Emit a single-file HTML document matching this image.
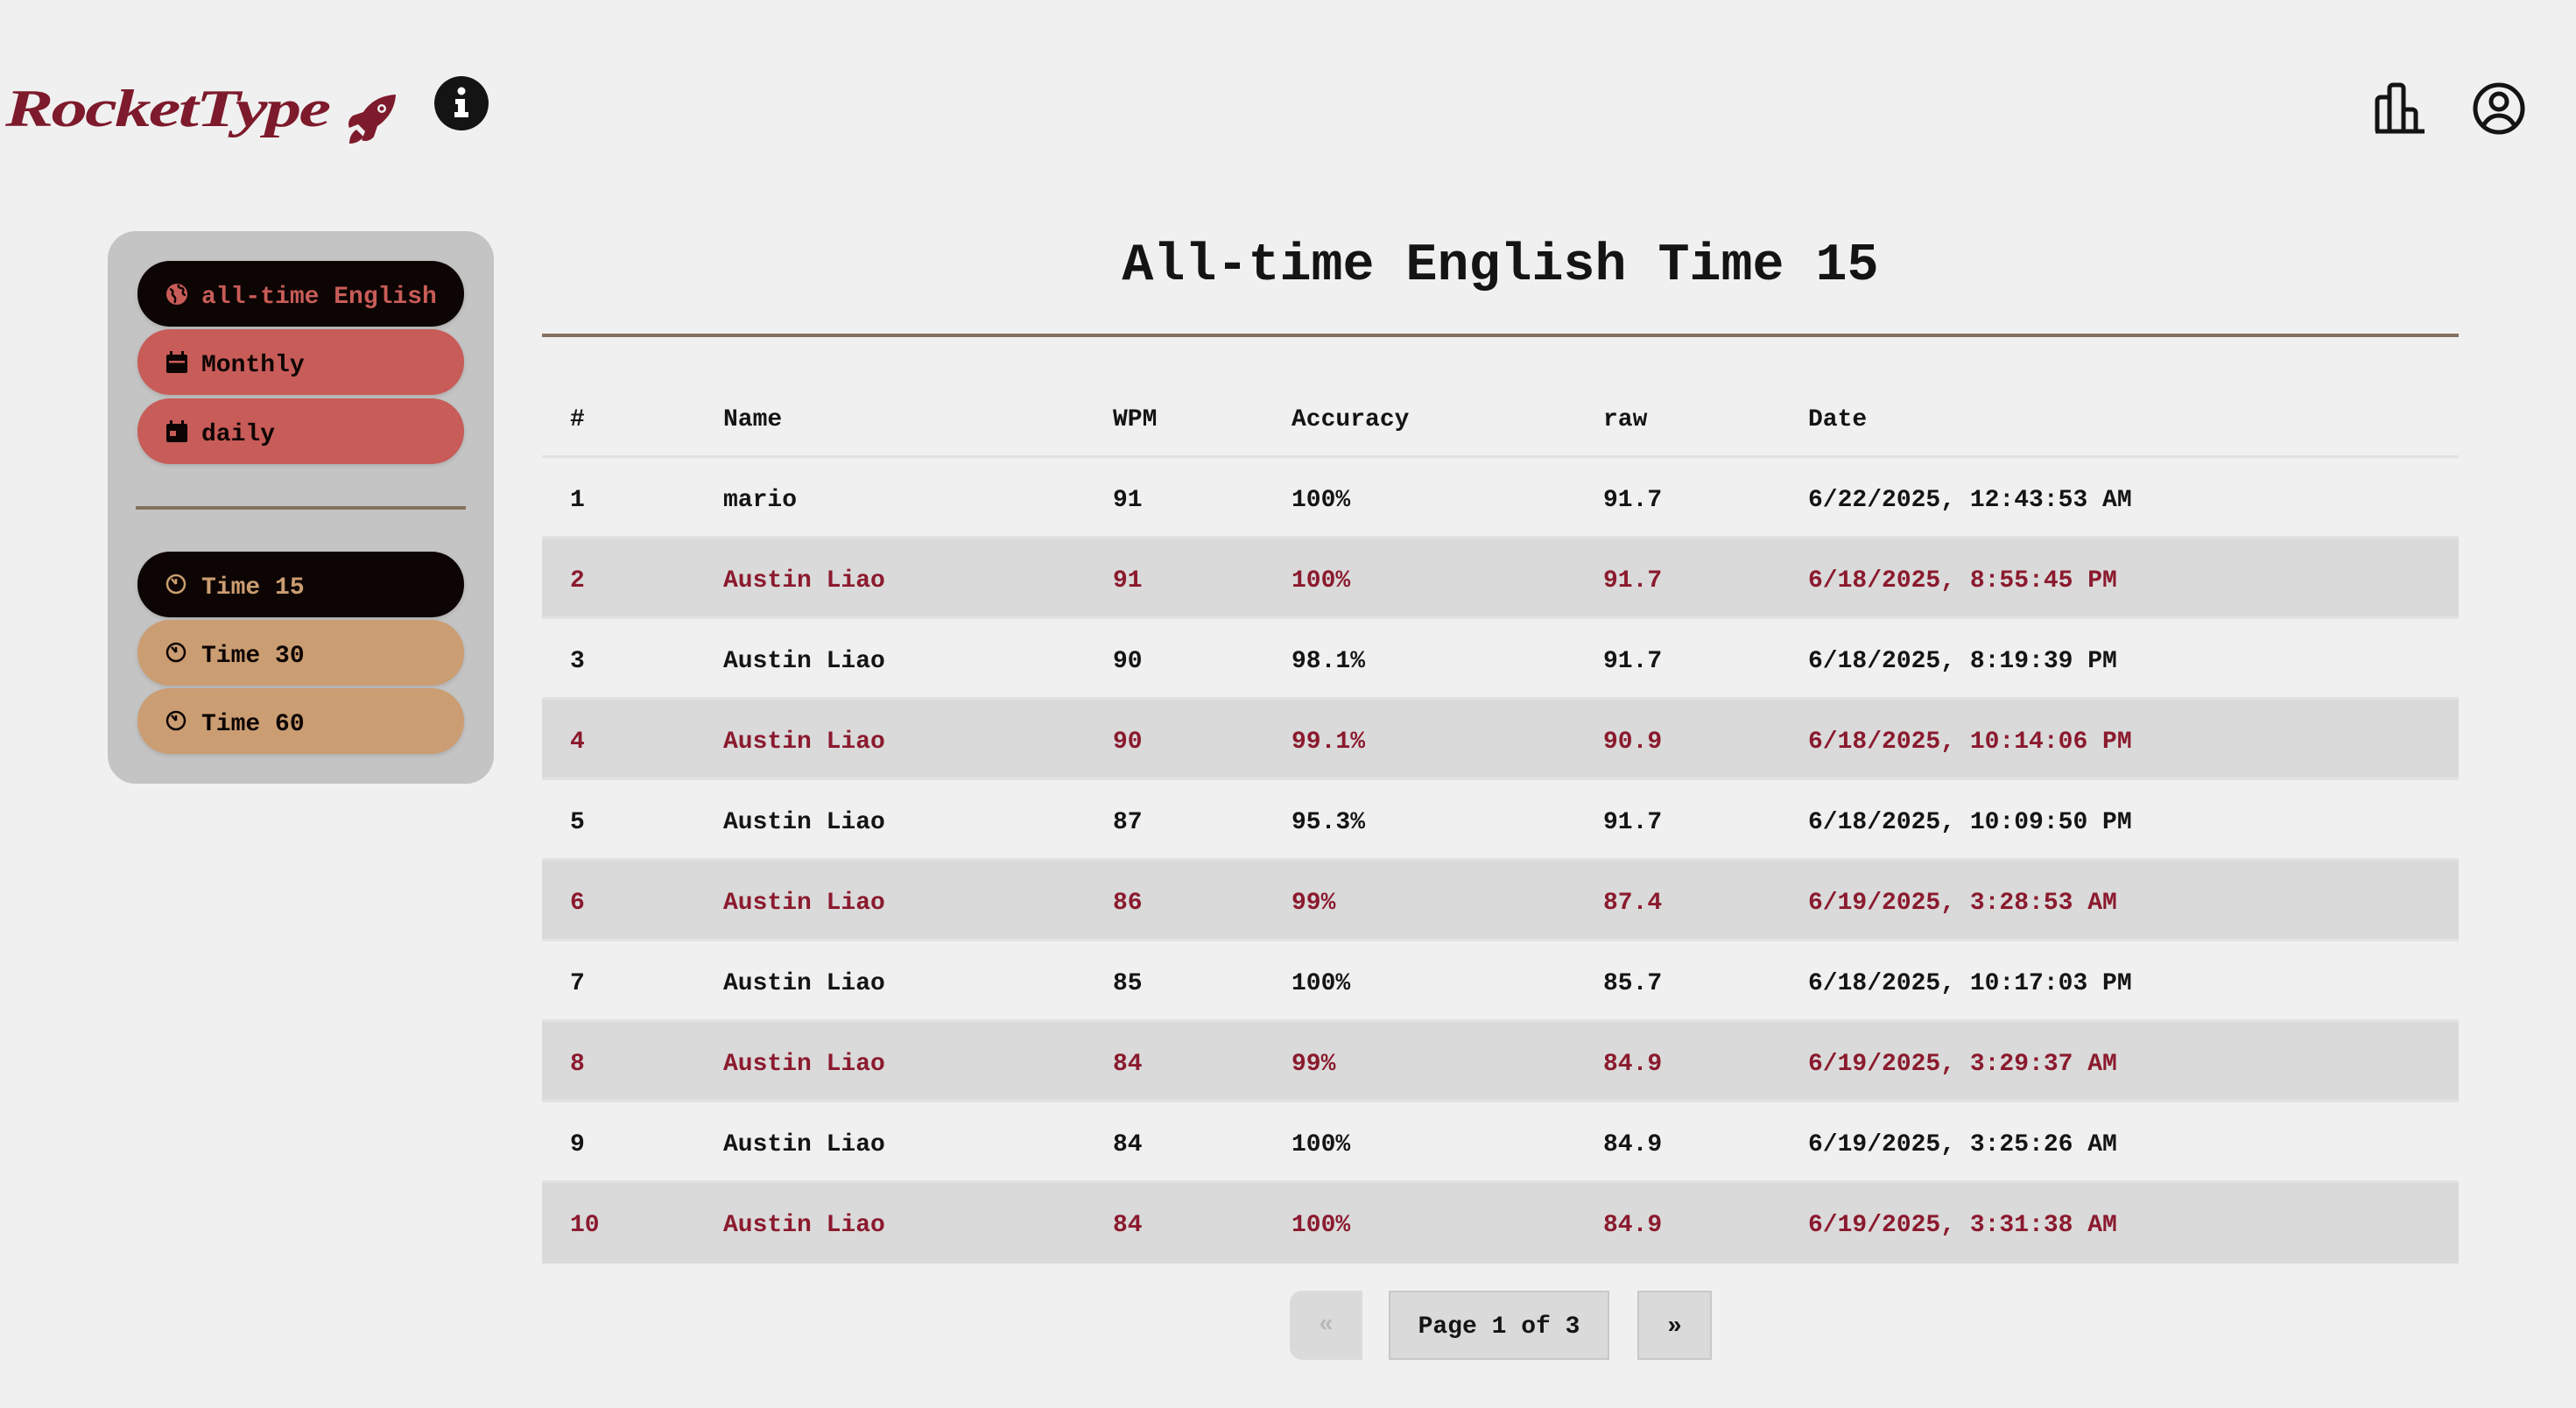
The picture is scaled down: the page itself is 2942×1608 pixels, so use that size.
<!DOCTYPE html>
<html><head><meta charset="utf-8"><style>
*{margin:0;padding:0;box-sizing:border-box}
body{width:2942px;height:1608px;background:#f0f0f0;position:relative;overflow:hidden;font-family:"Liberation Mono",monospace;font-weight:bold;color:#141414}
.abs{position:absolute}
.logo{left:6px;top:90px;font-family:"Liberation Serif",serif;font-style:italic;font-weight:bold;font-size:60px;color:#7d1a2b;transform:scaleX(1.38);transform-origin:left top;letter-spacing:-2px}
.panel{left:123px;top:264px;width:441px;height:631px;background:#c4c4c4;border-radius:32px}
.btn{position:absolute;left:157px;width:373px;height:75px;border-radius:37px;font-size:28px;line-height:75px;padding-top:4px;padding-left:73px;box-shadow:0 2px 5px rgba(0,0,0,.12)}
.btn svg{position:absolute;left:32px;top:25px}
.div{left:155px;top:578px;width:377px;height:4px;background:#85705f}
.title{left:619px;width:2189px;top:266px;text-align:center;font-size:60px;line-height:76px}
.hline{left:619px;top:381px;width:2189px;height:4px;background:#85705f}
.row{position:absolute;left:619px;width:2189px;height:92px;line-height:92px;font-size:28px;border-bottom:3px solid #e2e2e2}
.row span{position:absolute;top:3px}
.s{background:#dadada;color:#8b1a2e}
.c1{left:32px}.c2{left:207px}.c3{left:652px}.c4{left:856px}.c5{left:1212px}.c6{left:1446px}
.pg{position:absolute;top:1474px;height:79px;background:#dadada;border:2px solid #c8c8c8;font-size:28px;line-height:75px;text-align:center}
</style></head><body>
<div class="abs logo">RocketType</div>
<svg class="abs" style="left:395px;top:106px" width="58" height="60" viewBox="0 0 58 60"><path d="M57 2 C40 3 28 10 20 22 L8 26 C3 30 2 36 4 40 L14 36 L22 44 L18 54 C22 56 28 55 32 50 L36 38 C48 30 56 18 57 2Z" fill="#7d1a2b"/><circle cx="41" cy="18" r="5" fill="#f0f0f0"/><circle cx="41" cy="18" r="2.5" fill="#7d1a2b"/><path d="M12 42 C6 46 4 52 4 58 C10 58 16 56 20 50Z" fill="#7d1a2b"/></svg>
<svg class="abs" style="left:496px;top:87px" width="62" height="62" viewBox="0 0 62 62"><circle cx="31" cy="31" r="31" fill="#141414"/><circle cx="31" cy="17" r="4.5" fill="#fff"/><path d="M24 26h11v15h4v6H23v-6h4v-9h-3z" fill="#fff"/></svg>
<svg class="abs" style="left:2711px;top:93px" width="62" height="62" viewBox="0 0 62 62" fill="none" stroke="#141414" stroke-width="5" stroke-linejoin="round"><path d="M4 57V22a4 4 0 0 1 4-4h10M18 57V8a4 4 0 0 1 4-4h8a4 4 0 0 1 4 4v49M34 57V32h10a4 4 0 0 1 4 4v21M2 57h56"/></svg>
<svg class="abs" style="left:2823px;top:93px" width="62" height="62" viewBox="0 0 62 62" fill="none" stroke="#141414" stroke-width="5"><circle cx="31" cy="31" r="27"/><circle cx="31" cy="23" r="9"/><path d="M13 51c4-8 10-12 18-12s14 4 18 12"/></svg>

<div class="abs panel"></div>
<div class="btn" style="top:298px;background:#0d0503;color:#c85c58"><svg width="26" height="26" viewBox="0 0 26 26"><circle cx="13" cy="13" r="12" fill="#c85c58"/><path d="M5 7c3 1 4 3 3 5s2 3 3 5-1 4 0 6M15 2c-1 3 1 4 3 4s3 2 2 4c-1 2 1 4 3 4" stroke="#0d0503" stroke-width="2.5" fill="none"/></svg>all-time English</div>
<div class="btn" style="top:376px;background:#c85c58;color:#0d0503"><svg width="26" height="26" viewBox="0 0 26 26"><rect x="1" y="4" width="24" height="21" rx="2" fill="#0d0503"/><rect x="5" y="0" width="3" height="6" fill="#0d0503"/><rect x="18" y="0" width="3" height="6" fill="#0d0503"/><rect x="4" y="11" width="18" height="2.5" fill="#c85c58"/></svg>Monthly</div>
<div class="btn" style="top:455px;background:#c85c58;color:#0d0503"><svg width="26" height="26" viewBox="0 0 26 26"><rect x="1" y="4" width="24" height="21" rx="2" fill="#0d0503"/><rect x="5" y="0" width="3" height="6" fill="#0d0503"/><rect x="18" y="0" width="3" height="6" fill="#0d0503"/><rect x="5" y="12" width="7" height="6" fill="#c85c58"/></svg>daily</div>
<div class="abs div"></div>
<div class="btn" style="top:630px;background:#0d0503;color:#cb9d72"><svg width="24" height="24" viewBox="0 0 24 24" fill="none" stroke="#cb9d72" stroke-width="2.5"><circle cx="12" cy="12" r="10"/><path d="M12 12L7 6M12 6v6"/></svg>Time 15</div>
<div class="btn" style="top:708px;background:#cb9d72;color:#0d0503"><svg width="24" height="24" viewBox="0 0 24 24" fill="none" stroke="#0d0503" stroke-width="2.5"><circle cx="12" cy="12" r="10"/><path d="M12 12L7 6M12 6v6"/></svg>Time 30</div>
<div class="btn" style="top:786px;background:#cb9d72;color:#0d0503"><svg width="24" height="24" viewBox="0 0 24 24" fill="none" stroke="#0d0503" stroke-width="2.5"><circle cx="12" cy="12" r="10"/><path d="M12 12L7 6M12 6v6"/></svg>Time 60</div>

<div class="abs title">All-time English Time 15</div>
<div class="abs hline"></div>

<div class="row" style="top:431px"><span class="c1">#</span><span class="c2">Name</span><span class="c3">WPM</span><span class="c4">Accuracy</span><span class="c5">raw</span><span class="c6">Date</span></div>
<div class="row" style="top:523px"><span class="c1">1</span><span class="c2">mario</span><span class="c3">91</span><span class="c4">100%</span><span class="c5">91.7</span><span class="c6">6/22/2025, 12:43:53 AM</span></div>
<div class="row s" style="top:615px"><span class="c1">2</span><span class="c2">Austin Liao</span><span class="c3">91</span><span class="c4">100%</span><span class="c5">91.7</span><span class="c6">6/18/2025, 8:55:45 PM</span></div>
<div class="row" style="top:707px"><span class="c1">3</span><span class="c2">Austin Liao</span><span class="c3">90</span><span class="c4">98.1%</span><span class="c5">91.7</span><span class="c6">6/18/2025, 8:19:39 PM</span></div>
<div class="row s" style="top:799px"><span class="c1">4</span><span class="c2">Austin Liao</span><span class="c3">90</span><span class="c4">99.1%</span><span class="c5">90.9</span><span class="c6">6/18/2025, 10:14:06 PM</span></div>
<div class="row" style="top:891px"><span class="c1">5</span><span class="c2">Austin Liao</span><span class="c3">87</span><span class="c4">95.3%</span><span class="c5">91.7</span><span class="c6">6/18/2025, 10:09:50 PM</span></div>
<div class="row s" style="top:983px"><span class="c1">6</span><span class="c2">Austin Liao</span><span class="c3">86</span><span class="c4">99%</span><span class="c5">87.4</span><span class="c6">6/19/2025, 3:28:53 AM</span></div>
<div class="row" style="top:1075px"><span class="c1">7</span><span class="c2">Austin Liao</span><span class="c3">85</span><span class="c4">100%</span><span class="c5">85.7</span><span class="c6">6/18/2025, 10:17:03 PM</span></div>
<div class="row s" style="top:1167px"><span class="c1">8</span><span class="c2">Austin Liao</span><span class="c3">84</span><span class="c4">99%</span><span class="c5">84.9</span><span class="c6">6/19/2025, 3:29:37 AM</span></div>
<div class="row" style="top:1259px"><span class="c1">9</span><span class="c2">Austin Liao</span><span class="c3">84</span><span class="c4">100%</span><span class="c5">84.9</span><span class="c6">6/19/2025, 3:25:26 AM</span></div>
<div class="row s" style="top:1351px;border-bottom:none"><span class="c1">10</span><span class="c2">Austin Liao</span><span class="c3">84</span><span class="c4">100%</span><span class="c5">84.9</span><span class="c6">6/19/2025, 3:31:38 AM</span></div>

<div class="pg" style="left:1473px;width:83px;border:none;border-radius:14px 0 0 14px;color:#b8b8b8;line-height:79px">«</div>
<div class="pg" style="left:1586px;width:252px;padding-top:2px">Page 1 of 3</div>
<div class="pg" style="left:1870px;width:85px;padding-top:2px">»</div>
</body></html>
